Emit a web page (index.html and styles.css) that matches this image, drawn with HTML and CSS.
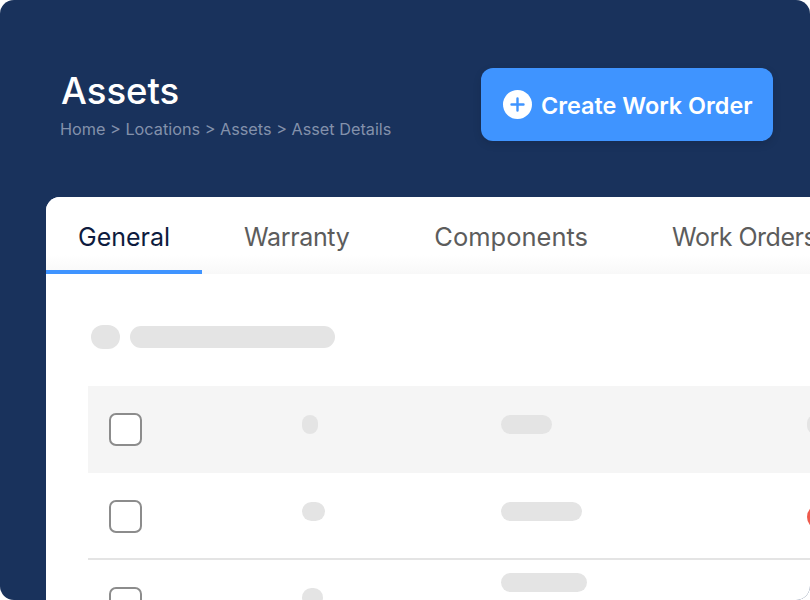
FILE: index.html
```html
<!DOCTYPE html>
<html lang="en">
<head>
<meta charset="UTF-8">
<meta name="viewport" content="width=device-width, initial-scale=1.0">
<title>Assets</title>
<link rel="stylesheet" href="styles.css">
</head>
<body>

<div class="frame">
  <div class="page-head">
    <div class="titles">
      <h1>Assets</h1>
      <p class="crumbs">Home &gt; Locations &gt; Assets &gt; Asset Details</p>
    </div>
    <button class="create-btn" type="button">
      <svg class="plus" width="29" height="29" viewBox="0 0 29 29">
        <circle cx="14.5" cy="14.5" r="14.5" fill="#fff"/>
        <path d="M14.5 8.5v12M8.5 14.5h12" stroke="#3f94ff" stroke-width="2.4" stroke-linecap="round"/>
      </svg>
      <span class="btn-label">Create Work Order</span>
    </button>
  </div>

  <div class="card">
    <div class="tabs">
      <div class="tab tab-active">General</div>
      <div class="tab tab-warranty">Warranty</div>
      <div class="tab tab-components">Components</div>
      <div class="tab tab-orders">Work Orders</div>
    </div>

    <div class="card-body">
      <div class="filter">
        <span class="bar filter-dot"></span>
        <span class="bar filter-line"></span>
      </div>

      <div class="row row-head">
        <span class="check"></span>
        <div class="col-a"><span class="bar w16"></span></div>
        <div class="col-b"><span class="bar w51"></span></div>
        <div class="col-c"><span class="bar w16"></span></div>
      </div>
      <div class="row row-line">
        <span class="check"></span>
        <div class="col-a"><span class="bar w23"></span></div>
        <div class="col-b"><span class="bar w81"></span></div>
        <div class="col-c"><span class="status status-red"></span></div>
      </div>
      <div class="row row-last">
        <span class="check"></span>
        <div class="col-a"><span class="bar w21"></span></div>
        <div class="col-b"><span class="bar w86"></span></div>
        <div class="col-c"><span class="status status-blue"></span></div>
      </div>
    </div>
  </div>
</div>

</body>
</html>
```

FILE: styles.css
```css
html, body {
  margin: 0;
  height: 100%;
  background-color: #fff;
  overflow: hidden;
}
.frame {
  box-sizing: border-box;
  width: 810px;
  height: 600px;
  overflow: hidden;
  border-radius: 14px;
  background-color: #19325c;
  font-family: Inter, "Liberation Sans", Arial, sans-serif;
}
.page-head {
  display: flex;
  justify-content: space-between;
  align-items: flex-start;
  height: 197px;
  box-sizing: border-box;
  padding: 68px 37px 0 60px;
}
.titles {
  padding-top: 1px;
}
h1 {
  margin: 0 0 0 1px;
  font-size: 36.5px;
  line-height: 44px;
  font-weight: 500;
  color: #fff;
}
.crumbs {
  margin: 6px 0 0;
  font-size: 16.25px;
  line-height: 20px;
  color: #8391ab;
}
.create-btn {
  display: flex;
  align-items: center;
  gap: 9px;
  width: 292px;
  height: 73px;
  padding: 0 0 0 22px;
  border: none;
  border-radius: 12px;
  background-color: #3f94ff;
  box-shadow: 0 3px 8px rgba(0,0,0,0.12);
  color: #fff;
  font-family: inherit;
  font-size: 23.4px;
  font-weight: 600;
  white-space: nowrap;
}
.plus {
  flex: none;
}
.btn-label {
  padding-top: 2px;
}
.card {
  margin-left: 46px;
  width: 800px;
  height: 420px;
  overflow: hidden;
  border-radius: 14px 0 0 0;
  background-color: #fff;
}
.tabs {
  display: flex;
  height: 77px;
  box-sizing: border-box;
  background: linear-gradient(#fff 75%, #f8f8f8);
  white-space: nowrap;
}
.tab {
  padding: 24px 0 0;
  font-size: 25px;
  line-height: 32px;
  color: #5c5c5c;
}
.tab-active {
  width: 156px;
  box-sizing: border-box;
  padding-left: 32px;
  color: #0d1b3e;
  border-bottom: 4px solid #3f94ff;
}
.tab-warranty {
  margin-left: 42px;
  letter-spacing: -0.35px;
}
.tab-components {
  margin-left: 85px;
  font-size: 25.5px;
}
.tab-orders {
  margin-left: 84px;
  letter-spacing: -0.5px;
}
.card-body {
  padding: 51px 0 0 42px;
}
.filter {
  display: flex;
  align-items: center;
  gap: 10px;
  margin: 0 0 37px 3px;
}
.bar {
  display: block;
  height: 19px;
  border-radius: 10px;
  background-color: #e4e4e4;
}
.filter-dot {
  width: 29px;
  height: 24px;
  border-radius: 12px;
}
.filter-line {
  width: 205px;
  height: 22px;
  border-radius: 11px;
}
.row {
  display: flex;
  box-sizing: border-box;
  padding-left: 21px;
}
.row-head {
  height: 87px;
  padding-top: 27px;
  background-color: #f5f5f5;
}
.row-line {
  height: 87px;
  padding-top: 27px;
  border-bottom: 2px solid #e4e4e4;
}
.row-last {
  height: 60px;
  padding-top: 27px;
}
.check {
  flex: none;
  width: 33px;
  height: 33px;
  box-sizing: border-box;
  border: 2px solid #8c8c8c;
  border-radius: 7px;
  background-color: #fff;
}
.col-a {
  margin-left: 160px;
  width: 199px;
  margin-top: 2px;
}
.col-b {
  width: 306px;
  margin-top: 2px;
}
.col-c {
  margin-top: 2px;
}
.row-last .col-b {
  margin-top: -14px;
}
.row-last .col-a {
  margin-top: 1px;
}
.w16 { width: 16px; }
.w21 { width: 21px; }
.w23 { width: 23px; }
.w51 { width: 51px; }
.w81 { width: 81px; }
.w86 { width: 86px; }
.status {
  display: block;
  width: 26px;
  height: 26px;
  border-radius: 50%;
}
.status-red {
  margin-top: 2px;
  background-color: #ef5a4c;
}
.status-blue {
  margin-top: 3px;
  background-color: #3f94ff;
}
```
